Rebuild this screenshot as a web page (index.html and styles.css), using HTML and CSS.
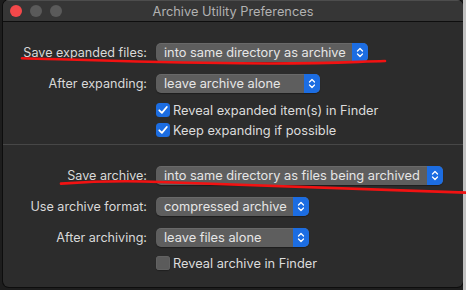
FILE: index.html
```html
<!DOCTYPE html>
<html>
<head>
<meta charset="utf-8">
<link rel="stylesheet" href="styles.css">
</head>
<body>
<div class="screen">
  <div class="window">
    <div class="titlebar">
      <div class="lights">
        <span class="light red"></span>
        <span class="light grey"></span>
        <span class="light grey"></span>
      </div>
      <div class="title">Archive Utility Preferences</div>
      <div></div>
    </div>
    <div class="content">
      <div class="row row-popup">
        <div class="label">Save expanded files:</div>
        <div class="popup w-expand-dest">
          <span class="popup-text">into same directory as archive</span>
          <span class="stepper"><svg width="8" height="13" viewBox="0 0 8 13"><path d="M1.5 5 L4 2.5 L6.5 5 M1.5 8 L4 10.5 L6.5 8" /></svg></span>
        </div>
      </div>
      <div class="row row-popup row-before-checks">
        <div class="label">After expanding:</div>
        <div class="popup w-expand-after">
          <span class="popup-text">leave archive alone</span>
          <span class="stepper"><svg width="8" height="13" viewBox="0 0 8 13"><path d="M1.5 5 L4 2.5 L6.5 5 M1.5 8 L4 10.5 L6.5 8" /></svg></span>
        </div>
      </div>
      <div class="row row-check">
        <div class="label"></div>
        <div class="checkline">
          <span class="check on"><svg width="14" height="14" viewBox="0 0 14 14"><path d="M3.3 7.3 L5.9 9.9 L10.8 4" /></svg></span>
          <span class="check-label">Reveal expanded item(s) in Finder</span>
        </div>
      </div>
      <div class="row row-check">
        <div class="label"></div>
        <div class="checkline">
          <span class="check on"><svg width="14" height="14" viewBox="0 0 14 14"><path d="M3.3 7.3 L5.9 9.9 L10.8 4" /></svg></span>
          <span class="check-label">Keep expanding if possible</span>
        </div>
      </div>

      <div class="separator"></div>

      <div class="row row-popup">
        <div class="label">Save archive:</div>
        <div class="popup w-archive-dest">
          <span class="popup-text">into same directory as files being archived</span>
          <span class="stepper"><svg width="8" height="13" viewBox="0 0 8 13"><path d="M1.5 5 L4 2.5 L6.5 5 M1.5 8 L4 10.5 L6.5 8" /></svg></span>
        </div>
      </div>
      <div class="row row-popup">
        <div class="label">Use archive format:</div>
        <div class="popup w-format">
          <span class="popup-text">compressed archive</span>
          <span class="stepper"><svg width="8" height="13" viewBox="0 0 8 13"><path d="M1.5 5 L4 2.5 L6.5 5 M1.5 8 L4 10.5 L6.5 8" /></svg></span>
        </div>
      </div>
      <div class="row row-popup row-before-last">
        <div class="label">After archiving:</div>
        <div class="popup w-format">
          <span class="popup-text">leave files alone</span>
          <span class="stepper"><svg width="8" height="13" viewBox="0 0 8 13"><path d="M1.5 5 L4 2.5 L6.5 5 M1.5 8 L4 10.5 L6.5 8" /></svg></span>
        </div>
      </div>
      <div class="row row-check">
        <div class="label"></div>
        <div class="checkline">
          <span class="check off"></span>
          <span class="check-label">Reveal archive in Finder</span>
        </div>
      </div>
    </div>
  </div>
  <div class="edge"></div>
  <svg class="annot" width="466" height="290" viewBox="0 0 466 290">
    <path d="M22 58.2 C 70 59.5, 150 62.5, 240 63.3 S 350 61.8, 385 61" />
    <path d="M61 183.6 C 90 181.6, 130 180.8, 160 182 S 300 187, 470 192.8" />
  </svg>
</div>
</body>
</html>
```

FILE: styles.css
```css
html, body {
  margin: 0;
  padding: 0;
}
body {
  width: 466px;
  height: 290px;
  overflow: hidden;
  background: #1d1d1d;
  font-family: Inter, "Noto Sans", "Liberation Sans", sans-serif;
}
.screen {
  position: relative;
  display: flex;
  width: 466px;
  height: 290px;
  padding-left: 3px;
  box-sizing: border-box;
}
.window {
  width: 460px;
  height: 287px;
  background: #2c2c2c;
  border-radius: 6px;
  overflow: hidden;
  box-shadow: 0 0 0 1px #0d0d0d;
}
.edge {
  width: 3px;
  height: 290px;
  background: #c2c2c2;
}
.titlebar {
  height: 21px;
  border-bottom: 1px solid #0e0e0e;
  background: #363636;
  box-shadow: inset 0 1px 0 #4d4d4d;
  display: grid;
  grid-template-columns: 1fr auto 1fr;
  align-items: center;
}
.lights {
  display: flex;
  gap: 8px;
  padding-left: 7px;
  padding-top: 1px;
}
.light {
  width: 12px;
  height: 12px;
  border-radius: 50%;
}
.red {
  background: #f4484a;
}
.grey {
  background: #5a5a5a;
}
.title {
  font-size: 12.8px;
  color: #b2b2b2;
  padding-top: 1px;
}
.content {
  padding-top: 21px;
}
.row {
  display: grid;
  grid-template-columns: 144px max-content;
  column-gap: 9px;
  align-items: center;
}
.row-popup {
  height: 19px;
  margin-bottom: 12px;
}
.row-before-checks {
  margin-bottom: 7px;
}
.row-before-last {
  margin-bottom: 6px;
}
.row-check {
  height: 20px;
}
.label {
  text-align: right;
  font-size: 12.6px;
  color: #d9d9d9;
  white-space: nowrap;
}
.popup {
  display: flex;
  align-items: center;
  height: 19px;
  border-radius: 5px;
  background: #5e5e5e;
  box-shadow: inset 0 1px 0 rgba(255, 255, 255, 0.07), 0 1px 1px rgba(0, 0, 0, 0.35);
  overflow: hidden;
}
.w-expand-dest { width: 212px; }
.w-expand-after { width: 164px; }
.w-archive-dest { width: 287px; }
.w-format { width: 153px; }
.popup-text {
  flex: 1;
  padding-left: 8px;
  font-size: 12.8px;
  color: #e6e6e6;
  white-space: nowrap;
  overflow: hidden;
}
.stepper {
  width: 16px;
  height: 19px;
  background: #1c6de2;
  display: flex;
  align-items: center;
  justify-content: center;
}
.stepper path {
  fill: none;
  stroke: #ffffff;
  stroke-width: 1.3;
  stroke-linecap: round;
  stroke-linejoin: round;
}
.checkline {
  display: flex;
  align-items: center;
}
.check {
  width: 14px;
  height: 14px;
  border-radius: 3.5px;
  display: flex;
  align-items: center;
  justify-content: center;
  box-sizing: border-box;
}
.check.on {
  background: #1c6de2;
}
.check.off {
  background: #5b5b5b;
  box-shadow: inset 0 0 0 0.5px #6a6a6a, 0 1px 1px rgba(0, 0, 0, 0.3);
}
.check path {
  fill: none;
  stroke: #ffffff;
  stroke-width: 1.8;
  stroke-linecap: round;
  stroke-linejoin: round;
}
.check-label {
  margin-left: 3px;
  font-size: 12.8px;
  color: #dcdcdc;
  white-space: nowrap;
}
.separator {
  height: 1px;
  background: #474747;
  margin-top: 4px;
  margin-bottom: 21px;
}
.annot {
  position: absolute;
  left: 0;
  top: 0;
  pointer-events: none;
}
.annot path {
  fill: none;
  stroke: #f21212;
  stroke-width: 2.6;
  stroke-linecap: round;
}
```
